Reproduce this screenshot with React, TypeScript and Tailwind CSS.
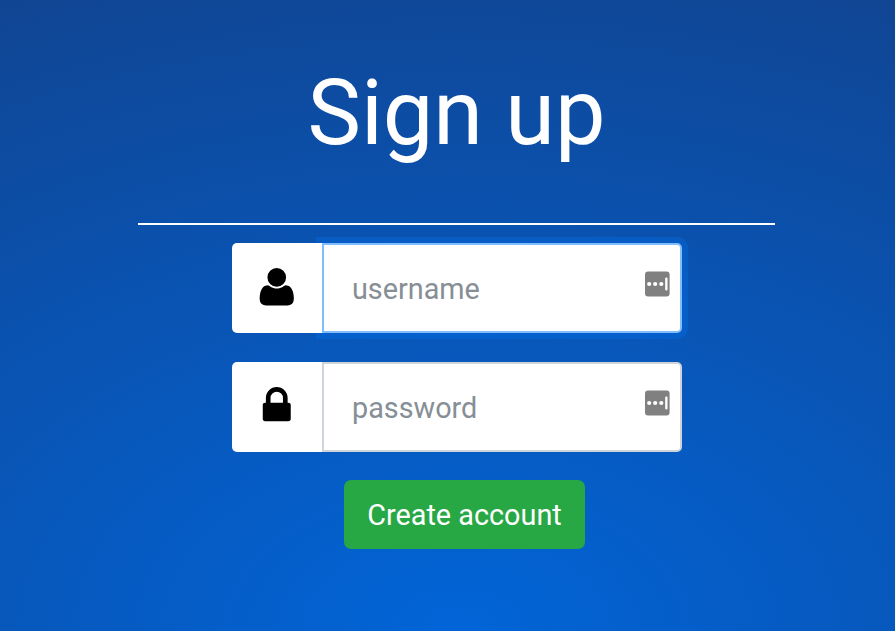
import React from "react";

const USER_PATH =
  "M1600 1405q0 120-73 189.5t-194 69.5h-874q-121 0-194-69.5t-73-189.5q0-53 3.5-103.5t14-109 26.5-108.5 43-97.5 62-81 85.5-53.5 111.5-20q9 0 42 21.5t74.5 48 108 48 133.5 21.5 133.5-21.5 108-48 74.5-48 42-21.5q61 0 111.5 20t85.5 53.5 62 81 43 97.5 26.5 108.5 14 109 3.5 103.5zm-320-893q0 159-112.5 271.5t-271.5 112.5-271.5-112.5-112.5-271.5 112.5-271.5 271.5-112.5 271.5 112.5 112.5 271.5z";
const LOCK_PATH =
  "M640 768h512v-192q0-106-75-181t-181-75-181 75-75 181v192zm832 96v576q0 40-28 68t-68 28h-960q-40 0-68-28t-28-68v-576q0-40 28-68t68-28h32v-192q0-184 132-316t316-132 316 132 132 316v192h32q40 0 68 28t28 68z";

function PasswordManagerIcon() {
  return (
    <svg className="mb-[9px] h-[26px] w-[26px] shrink-0" viewBox="0 0 26 26">
      <rect x="0" y="0.6" width="24.6" height="25" rx="3" fill="#808080" />
      <circle cx="4.2" cy="13" r="2.1" fill="#fff" />
      <circle cx="10.2" cy="13" r="2.1" fill="#fff" />
      <circle cx="16.3" cy="13" r="2.1" fill="#fff" />
      <rect x="20.2" y="6.5" width="2.3" height="13" rx="1" fill="#fff" />
    </svg>
  );
}

function Field({ icon, label, focused }: { icon: string; label: string; focused?: boolean }) {
  return (
    <div className="flex h-[90px] w-[450px]">
      <div className="relative z-10 flex w-[90px] shrink-0 items-center justify-center rounded-l-[5px] bg-white">
        <svg className="mb-[3px] h-[43.5px] w-[43.5px]" viewBox="0 0 1792 1792" fill="#000">
          <path d={icon} />
        </svg>
      </div>
      <div
        className={
          "flex min-w-0 flex-1 items-center rounded-r-[5px] border-2 bg-white pl-[28.5px] pr-[9px] " +
          (focused ? "border-[#80bdff] shadow-[0_0_0_6px_rgba(0,123,255,0.25)]" : "border-[#ced4da]")
        }
      >
        <input
          type={label === "password" ? "password" : "text"}
          placeholder={label}
          className="mt-px min-w-0 flex-1 bg-transparent text-[28.8px] leading-[44px] outline-none placeholder:text-[#868e96]"
        />
        <PasswordManagerIcon />
      </div>
    </div>
  );
}

export default function App() {
  return (
    <div className="h-[631px] w-[895px] overflow-hidden bg-[radial-gradient(2020px_1262px_at_457px_631px,#0264d6_1%,#1c2b5a_100%)] font-['Roboto',sans-serif]">
      <div className="ml-[138px] flex w-[637px] flex-col items-center">
        <h1 className="mt-[59px] text-[90px] leading-[109px] text-white">Sign up</h1>
        <hr className="mt-[55px] w-full border-0 border-t-2 border-white" />
        <form className="mt-[18px] flex flex-col items-center gap-[29px]">
          <Field icon={USER_PATH} label="username" focused />
          <Field icon={LOCK_PATH} label="password" />
          <button
            type="button"
            className="-mt-px ml-[15px] h-[69px] w-[241px] rounded-[7px] bg-[#28a745] pl-px pt-[3px] text-[28.8px] text-white"
          >
            Create account
          </button>
        </form>
      </div>
    </div>
  );
}
